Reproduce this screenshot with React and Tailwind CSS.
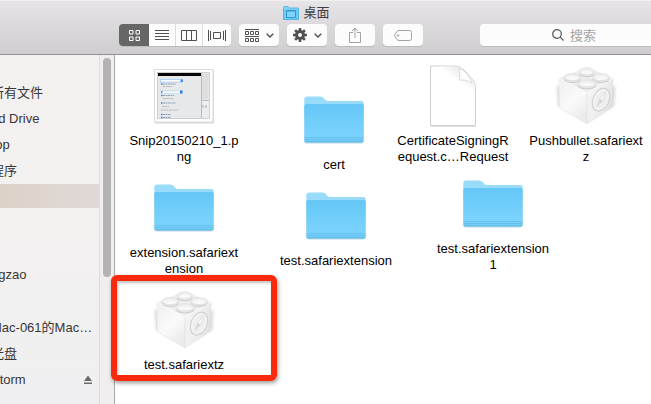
import React from "react";

function FolderIcon() {
  return (
    <svg className="h-12 w-15" viewBox="0 0 60 48" aria-hidden="true">
      <defs>
        <linearGradient id="folderFront" x1="0" y1="0" x2="0" y2="1">
          <stop offset="0" stopColor="#65c7f6" />
          <stop offset="0.85" stopColor="#7bd3fd" />
          <stop offset="1" stopColor="#6fc9f3" />
        </linearGradient>
      </defs>
      <rect x="0.5" y="10" width="59" height="37.6" rx="2" fill="#c9d3d9" />
      <path d="M0.3 3Q0.3 0.5 2.6 0.5H16.5Q18.5 0.5 19.8 2L21.2 3.8Q22.3 5 24 5H57.4Q59.7 5 59.7 7.3V20H0.3Z" fill="#98dcfa" />
      <path d="M0.3 10.2Q0.3 8 2.5 8H57.5Q59.7 8 59.7 10.2V44.6Q59.7 46.8 57.5 46.8H2.5Q0.3 46.8 0.3 44.6Z" fill="url(#folderFront)" />
      <path d="M0.5 41.5H59.5M0.5 43.5H59.5M0.8 45.5H59.2" stroke="#59b5e2" strokeWidth="0.6" />
    </svg>
  );
}

function PageIcon() {
  return (
    <svg className="h-16 w-12" viewBox="0 0 48 64" aria-hidden="true">
      <defs>
        <linearGradient id="pageCurl" x1="1" y1="0" x2="0.25" y2="0.9">
          <stop offset="0" stopColor="#dedede" />
          <stop offset="0.35" stopColor="#efefef" />
          <stop offset="0.6" stopColor="#ffffff" />
        </linearGradient>
      </defs>
      <path d="M1.5 2H25Q31 2 35 6L42 13.500Q46.5 18 46.5 25V61.500H1.5Z" fill="#fff" stroke="#cfcfcf" />
      <path d="M10 2.5H25Q31 2.5 35 6.5L42 14Q46 18 46 25V32Z" fill="url(#pageCurl)" />
      <path d="M30 4Q31.500 10 30.5 16Q37 15 43 19Q42 14 37 9Q33 5 30 4Z" fill="#fdfdfd" stroke="#d4d4d4" strokeWidth="0.8" />
      <path d="M1.500 62.500H46.500" stroke="#dedede" />
    </svg>
  );
}

function BrickStud({ cx, cy, r }) {
  return (
    <g>
      <ellipse cx={cx} cy={cy + 7} rx={r} ry="11" fill="#cdcdcd" />
      <ellipse cx={cx} cy={cy + 4} rx={r} ry="11" fill="#e6e6e6" />
      <ellipse cx={cx} cy={cy} rx={r} ry="10.500" fill="#ededed" stroke="#d6d6d6" strokeWidth="1.500" />
      <ellipse cx={cx} cy={cy + 3} rx={r - 6} ry="6" fill="#f8f8f8" />
    </g>
  );
}

function BrickIcon() {
  return (
    <svg className="h-15 w-16" viewBox="104 26 192 180" aria-hidden="true">
      <defs>
        <linearGradient id="brickLeft" x1="0" y1="0" x2="0.6" y2="1">
          <stop offset="0" stopColor="#efefef" />
          <stop offset="0.6" stopColor="#fafafa" />
          <stop offset="1" stopColor="#ebebeb" />
        </linearGradient>
        <linearGradient id="brickRight" x1="0" y1="0" x2="1" y2="0.5">
          <stop offset="0" stopColor="#f5f5f5" />
          <stop offset="0.7" stopColor="#ececec" />
          <stop offset="1" stopColor="#dfdfdf" />
        </linearGradient>
        <filter id="brickShade" x="-20%" y="-20%" width="140%" height="140%">
          <feGaussianBlur stdDeviation="5" />
        </filter>
      </defs>
      <path d="M112 84 203 120 288 84 285 146 203 194 116 146Z" fill="#dadada" filter="url(#brickShade)" />
      <path d="M118 63 203 30 282 63 203 108Z" fill="#eeeeee" />
      <path d="M118 63 203 106V200L121 151Z" fill="url(#brickLeft)" stroke="#dedede" />
      <path d="M203 106 282 63 278 149 203 200Z" fill="url(#brickRight)" stroke="#dadada" />
      <path d="M119 64 203 107 281 64" fill="none" stroke="#fcfcfc" strokeWidth="3" />
      <BrickStud cx={202} cy={42} r={23} />
      <BrickStud cx={159} cy={59} r={25} />
      <BrickStud cx={245} cy={59} r={25} />
      <BrickStud cx={203} cy={78} r={28} />
      <g transform="rotate(24 245 127)">
        <ellipse cx="245" cy="127" rx="24" ry="36" fill="#eeeeee" stroke="#cfcfcf" strokeWidth="3" />
        <ellipse cx="245" cy="127" rx="19" ry="30" fill="none" stroke="#f8f8f8" strokeWidth="2" />
        <path d="M248 99 251 129 242 155 240 126Z" fill="#d6d6d6" />
        <path d="M248 99 251 129 240 126Z" fill="#fafafa" stroke="#cccccc" />
      </g>
    </svg>
  );
}

function SnapshotIcon() {
  return (
    <svg className="h-14 w-15" viewBox="0 0 60 56" aria-hidden="true">
      <rect x="1" y="2" width="59" height="53.500" fill="#d6d6d6" />
      <rect x="0.500" y="1.500" width="58.500" height="52.500" fill="#fff" stroke="#dcdcdc" />
      <rect x="4" y="5" width="51" height="45" fill="#eceeef" />
      <rect x="4" y="5" width="43.500" height="45" fill="#e6e8ea" />
      <rect x="4" y="5" width="43.500" height="3" fill="#050505" />
      <rect x="48" y="5.500" width="6.500" height="26" fill="#dedede" />
      <path d="M47.500 5V50M48 32.500H55" stroke="#bcbcbc" />
      <rect x="6.500" y="11.500" width="22" height="2.500" fill="#fff" stroke="#8dbcf0" strokeWidth="0.600" />
      <rect x="26.500" y="11.500" width="2.500" height="2.500" fill="#438ee8" />
      <rect x="7.500" y="23" width="20" height="2.500" fill="#fff" stroke="#a9cdf0" strokeWidth="0.600" />
      <rect x="26" y="22.500" width="2.500" height="3" fill="#2d79df" />
      <path d="M7 16H8.500M7 24H8.500M7 27.500H8.500M7 35H8.500M7 46.500H8.500M7 49.500H8.500" stroke="#3c82df" strokeWidth="1.500" />
      <path d="M9 16H22M9 27.500H20M9 35H22M9 46.500H17M9 49.500H17" stroke="#92a2b8" strokeDasharray="2 0.500" />
      <path d="M9 18.500H18M9 30.500H20M8 38.500H15M7 42H24" stroke="#b4b6b8" strokeDasharray="2 0.700" />
      <path d="M49 37V40M52 37V40" stroke="#aaa" />
      <rect x="3.500" y="4.500" width="52" height="46" fill="none" stroke="#a0a0a0" strokeWidth="0.500" />
    </svg>
  );
}

const files = [
  { lines: ["Snip20150210_1.p", "ng"], Icon: SnapshotIcon, place: "left-[9px] top-[9px]" },
  { lines: ["cert"], Icon: FolderIcon, place: "left-[159px] top-[33px]" },
  { lines: ["CertificateSigningR", "equest.c…Request"], Icon: PageIcon, place: "left-[278px] top-[9px]" },
  { lines: ["Pushbullet.safariext", "z"], Icon: BrickIcon, place: "left-[411px] top-[9px]" },
  { lines: ["extension.safariext", "ension"], Icon: FolderIcon, place: "left-[9px] top-[121px]" },
  { lines: ["test.safariextension"], Icon: FolderIcon, place: "left-[161px] top-[129px]" },
  { lines: ["test.safariextension", "1"], Icon: FolderIcon, place: "left-[318px] top-[117px]" },
  { lines: ["test.safariextz"], Icon: BrickIcon, place: "left-[9px] top-[233px]" },
];

function FileItem({ file }) {
  const { Icon, lines, place } = file;
  return (
    <li className={"absolute flex w-[120px] flex-col items-center " + place}>
      <div className="flex h-16 items-center justify-center">
        <Icon />
      </div>
      <p className="mt-[5px] text-center text-[13px] leading-4 whitespace-nowrap text-black">
        {lines.map((line) => (
          <span key={line} className="block">{line}</span>
        ))}
      </p>
    </li>
  );
}

function SidebarRow({ children, trailing }) {
  return (
    <li className="flex h-[26px] items-center justify-between pt-px pr-[7px]">
      <a href="#" className="-ml-[9px] whitespace-nowrap">{children}</a>
      {trailing}
    </li>
  );
}

function Sidebar() {
  return (
    <aside className="flex w-[115px] shrink-0 border-r border-[#a9a9a9] bg-linear-to-b from-[#f4f0f0] via-[#f3f1f0] to-[#efeff1]">
      <nav className="min-w-0 flex-1 overflow-hidden pt-6 text-[13px] text-[#383636]">
        <ul>
          <SidebarRow>所有文件</SidebarRow>
          <SidebarRow>ud Drive</SidebarRow>
          <SidebarRow>rop</SidebarRow>
          <SidebarRow>程序</SidebarRow>
          <li className="my-px h-6 bg-linear-to-r from-[#dbd3c7] to-[#e1d8d8]" />
        </ul>
        <ul className="mt-[53px]">
          <SidebarRow>ngzao</SidebarRow>
        </ul>
        <ul className="mt-[27px]">
          <SidebarRow>Mac-061的Mac…</SidebarRow>
          <SidebarRow>光盘</SidebarRow>
          <SidebarRow
            trailing={
              <button type="button" aria-label="推出">
                <svg className="h-[10px] w-2" viewBox="0 0 8 10" fill="#6a6a6a" aria-hidden="true">
                  <path d="M4 0.500 8 6H0Z" />
                  <rect y="7.500" width="8" height="1.500" />
                </svg>
              </button>
            }
          >
            Storm
          </SidebarRow>
        </ul>
      </nav>
      <div className="w-[15px] shrink-0 border-l border-[#dddbdb] bg-[#f0eeee] px-[3px] pt-[3px]">
        <div className="h-[219px] w-2 rounded-full bg-[#b4b2b2]" />
      </div>
    </aside>
  );
}

function Chevron() {
  return (
    <svg className="h-[5px] w-2" viewBox="0 0 8 5" fill="none" stroke="#565656" strokeWidth="1.500" aria-hidden="true">
      <path d="M0.700 0.700 4 4 7.300 0.700" />
    </svg>
  );
}

function ToolButton({ label, children }) {
  return (
    <button type="button" aria-label={label} className="flex h-[22px] w-10 items-center justify-center gap-[7px] rounded-sm bg-[#fcfcfc] shadow-[0_1px_0_#bdbbbd]">
      {children}
    </button>
  );
}

function ViewSwitch() {
  return (
    <div className="flex h-[22px] w-28 overflow-hidden rounded-sm bg-[#fcfcfc] shadow-[0_1px_0_#bdbbbd]">
      <button type="button" aria-label="图标" className="flex w-[30px] items-center justify-center bg-[#676667]">
        <svg className="h-[11px] w-[11px]" viewBox="0 0 11 11" fill="none" stroke="#fff" aria-hidden="true">
          <path d="M0.500 0.500h3.500v3.500h-3.500zM7 0.500h3.500v3.500h-3.500zM0.500 7h3.500v3.500h-3.500zM7 7h3.500v3.500h-3.500z" />
        </svg>
      </button>
      <button type="button" aria-label="列表" className="flex w-[27px] items-center justify-center border-r border-[#dcdcdc]">
        <svg className="h-[10px] w-[14px]" viewBox="0 0 14 10" stroke="#505050" aria-hidden="true">
          <path d="M0 0.500H14M0 3.500H14M0 6.500H14M0 9.500H14" />
        </svg>
      </button>
      <button type="button" aria-label="分栏" className="flex w-[27px] items-center justify-center border-r border-[#dcdcdc]">
        <svg className="h-[11px] w-4" viewBox="0 0 16 11" fill="none" stroke="#505050" aria-hidden="true">
          <path d="M0.500 0.500h15v10h-15zM5.500 0.500v10M10.500 0.500v10" />
        </svg>
      </button>
      <button type="button" aria-label="封面流" className="flex flex-1 items-center justify-center">
        <svg className="h-[11px] w-[18px]" viewBox="0 0 18 11" fill="none" stroke="#505050" aria-hidden="true">
          <path d="M0.500 0v11M2.500 1v9M5.500 2.500h7v6h-7zM15.500 1v9M17.500 0v11" />
        </svg>
      </button>
    </div>
  );
}

function Toolbar() {
  return (
    <header className="h-[55px] shrink-0 border-t border-b border-t-[#f1f0f1] border-b-[#929092] bg-linear-to-b from-[#e6e4e6] to-[#cfcdcf]">
      <div className="flex h-[23px] items-center justify-center gap-1 pr-[38px]">
        <svg className="h-[14px] w-4" viewBox="0 0 16 14" aria-hidden="true">
          <path d="M0.500 1.500Q0.500 0.500 1.500 0.500H5L6.500 2H14.500Q15.500 2 15.500 3V13.500H0.500Z" fill="#82d2f6" stroke="#57b5e4" />
          <rect x="1" y="3.500" width="14" height="9.500" fill="#6bcaf6" />
          <path d="M3.500 4.500h9v7h-9z" fill="#7fd4fb" stroke="#3298cf" />
          <path d="M3.500 5h9" stroke="#3298cf" />
        </svg>
        <h1 className="text-[13px] leading-5 text-[#3f3e3f]">桌面</h1>
      </div>
      <div className="flex items-center gap-2 pl-[119px]">
        <ViewSwitch />
        <ToolButton label="排列">
          <svg className="h-[13px] w-[14px]" viewBox="0 0 14 13" fill="none" stroke="#505050" aria-hidden="true">
            <path d="M0 0.500H14M0 7.500H14M0.500 2.500h3v3h-3zM5.500 2.500h3v3h-3zM10.500 2.500h3v3h-3zM0.500 9.500h3v3h-3zM5.500 9.500h3v3h-3zM10.500 9.500h3v3h-3z" />
          </svg>
          <Chevron />
        </ToolButton>
        <ToolButton label="操作">
          <svg className="h-[14px] w-[14px]" viewBox="-7 -7 14 14" aria-hidden="true">
            <g stroke="#505050" strokeWidth="2.600">
              <path d="M0 -7V-3M0 7V3M-7 0H-3M7 0H3M-4.900 -4.900-2.500 -2.500M4.900 4.900 2.500 2.500M-4.900 4.900-2.500 2.500M4.900 -4.900 2.500 -2.500" />
            </g>
            <circle r="3.500" fill="none" stroke="#505050" strokeWidth="3" />
          </svg>
          <Chevron />
        </ToolButton>
        <ToolButton label="共享">
          <svg className="h-4 w-3" viewBox="0 0 12 16" fill="none" stroke="#a2a2a2" aria-hidden="true">
            <path d="M4 5.500H0.500V15.500H11.500V5.500H8M6 11V1M3 4 6 1 9 4" />
          </svg>
        </ToolButton>
        <ToolButton label="标签">
          <svg className="h-[11px] w-[18px]" viewBox="0 0 18 11" fill="none" stroke="#a2a2a2" aria-hidden="true">
            <path d="M5 0.500H15.500Q17.500 0.500 17.500 2.500V8.500Q17.500 10.500 15.500 10.500H5Q4 10.500 3 9.500L0.800 6.500Q0.200 5.500 0.800 4.500L3 1.500Q4 0.500 5 0.500Z" />
            <circle cx="4" cy="5.500" r="0.800" />
          </svg>
        </ToolButton>
        <label className="ml-[49px] flex h-[22px] min-w-0 flex-1 items-center gap-[6px] rounded-l-sm bg-[#fcfcfc] pl-18 shadow-[0_1px_0_#bdbbbd]">
          <svg className="h-3 w-3 shrink-0" viewBox="0 0 12 12" fill="none" stroke="#565656" strokeWidth="1.200" aria-hidden="true">
            <circle cx="5" cy="5" r="4.300" />
            <path d="M8.200 8.200 11.500 11.500" />
          </svg>
          <input type="search" aria-label="搜索" placeholder="搜索" className="w-full min-w-0 bg-transparent pt-px text-[13px] leading-5 outline-none placeholder:text-[#a5a5a5]" />
        </label>
      </div>
    </header>
  );
}

export default function App() {
  return (
    <div className="flex min-h-screen flex-col overflow-hidden bg-white font-['Liberation_Sans','Noto_Sans_CJK_SC',sans-serif]">
      <Toolbar />
      <div className="flex flex-1">
        <Sidebar />
        <main className="relative min-w-0 flex-1 bg-white">
          <ul>
            {files.map((file) => (
              <FileItem key={file.place} file={file} />
            ))}
          </ul>
          <div className="pointer-events-none absolute top-[220px] -left-1 h-[106px] w-[166px] rounded-md border-6 border-[#f92a0b] shadow-[1px_2px_4px_rgba(0,0,0,0.4),inset_1px_2px_3px_rgba(0,0,0,0.25)]" />
        </main>
      </div>
    </div>
  );
}
